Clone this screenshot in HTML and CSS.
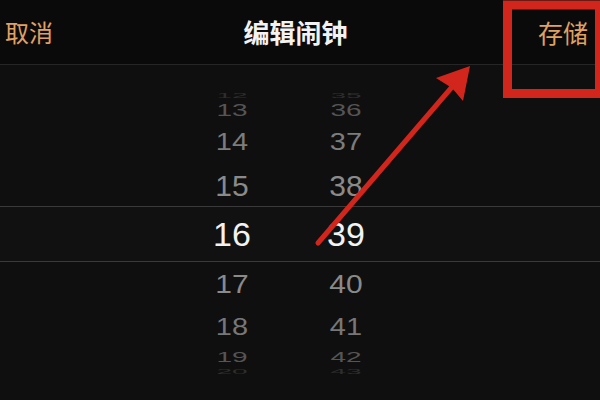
FILE: index.html
```html
<!DOCTYPE html>
<html lang="zh">
<head>
<meta charset="utf-8">
<title>编辑闹钟</title>
<link rel="stylesheet" href="styles.css">
</head>
<body>
<div class="screen">
  <header class="nav">
    <span class="nav-btn cancel">取消</span>
    <span class="nav-title">编辑闹钟</span>
    <span class="nav-btn save">存储</span>
  </header>
  <main class="picker">
    <div class="row r12"><span class="cell">12</span><span class="cell">35</span></div>
    <div class="row r13"><span class="cell">13</span><span class="cell">36</span></div>
    <div class="row r14"><span class="cell">14</span><span class="cell">37</span></div>
    <div class="row r15"><span class="cell">15</span><span class="cell">38</span></div>
    <div class="row r16 selected"><span class="cell">16</span><span class="cell">39</span></div>
    <div class="row r17"><span class="cell">17</span><span class="cell">40</span></div>
    <div class="row r18"><span class="cell">18</span><span class="cell">41</span></div>
    <div class="row r19"><span class="cell">19</span><span class="cell">42</span></div>
    <div class="row r20"><span class="cell">20</span><span class="cell">43</span></div>
  </main>
  <svg class="annotation" width="600" height="400" viewBox="0 0 600 400">
    <rect x="507.5" y="5" width="92" height="88.5" fill="none" stroke="#d2261c" stroke-width="9"/>
    <line x1="318" y1="243" x2="458" y2="80" stroke="#d2261c" stroke-width="5" stroke-linecap="round"/>
    <polygon points="470,66 436,78 452,88 463,101" fill="#d2261c"/>
  </svg>
</div>
</body>
</html>
```

FILE: styles.css
```css
html, body {
  margin: 0;
  padding: 0;
  background: #0f0f0f;
}

.screen {
  position: relative;
  width: 600px;
  height: 400px;
  overflow: hidden;
  background: #0f0f0f;
  font-family: "Liberation Sans", "Noto Sans CJK SC", sans-serif;
}

.nav {
  height: 65px;
  box-sizing: border-box;
  display: flex;
  align-items: center;
  justify-content: space-between;
  padding: 0 12px 0 5px;
  background: #0a0a0a;
  border-bottom: 1px solid #262626;
  font-family: "Noto Sans CJK SC", sans-serif;
}

.nav-btn {
  color: #e0a262;
  font-size: 24px;
  line-height: 1;
}

.save {
  font-size: 25px;
}

.nav-title {
  color: #f2f2f2;
  font-size: 26px;
  font-weight: 700;
  line-height: 1;
}

.picker {
  padding-top: 24px;
  display: flex;
  flex-direction: column;
}

.row {
  display: flex;
  align-items: center;
  gap: 34px;
  padding-left: 192px;
  box-sizing: border-box;
}

.cell {
  width: 80px;
  text-align: center;
  display: block;
  line-height: 1;
}

.r12 { height: 14px; }
.r12 .cell { font-size: 28px; color: #2e2e2e; transform: scaleY(0.25); }

.r13 { height: 16px; }
.r13 .cell { font-size: 28px; color: #555; transform: scaleY(0.6); }

.r14 { height: 46px; }
.r14 .cell { font-size: 29px; color: #7c7c7c; transform: scaleY(0.82); }

.r15 { height: 41px; }
.r15 .cell { font-size: 30px; color: #8a8a8a; }

.r16 {
  height: 56px;
  border-top: 1px solid #3a3a3a;
  border-bottom: 1px solid #3a3a3a;
  background: #111;
}
.r16 .cell { font-size: 34px; color: #f2f2f2; }

.r17 { height: 44px; }
.r17 .cell { font-size: 30px; color: #8a8a8a; transform: scaleY(0.86); }

.r18 { height: 42px; }
.r18 .cell { font-size: 29px; color: #777; transform: scaleY(0.8); }

.r19 { height: 18px; }
.r19 .cell { font-size: 28px; color: #555; transform: scaleY(0.5); }

.r20 { height: 12px; }
.r20 .cell { font-size: 28px; color: #2e2e2e; transform: scaleY(0.25); }

.annotation {
  position: absolute;
  left: 0;
  top: 0;
  pointer-events: none;
}
```
